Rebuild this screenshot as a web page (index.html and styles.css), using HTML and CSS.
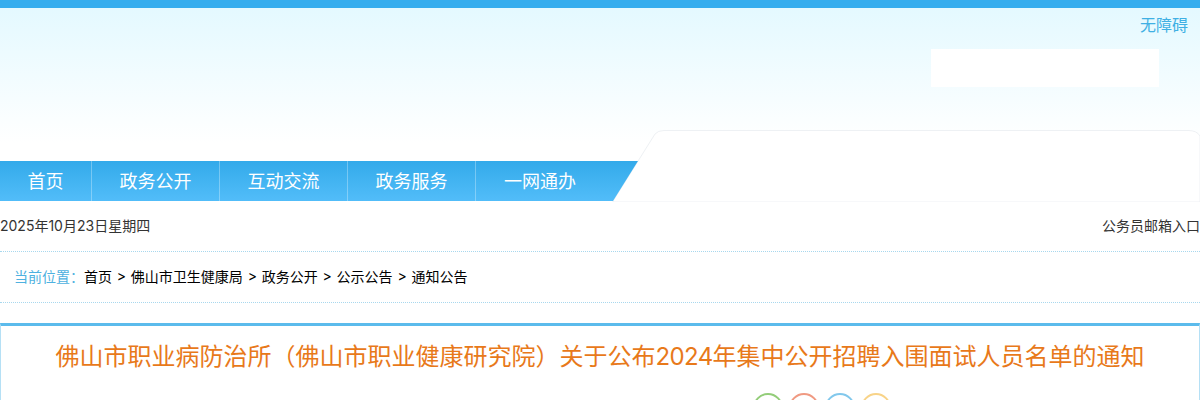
FILE: index.html
```html
<!DOCTYPE html>
<html lang="zh-CN">
<head>
<meta charset="utf-8">
<title>关于公布2024年集中公开招聘入围面试人员名单的通知</title>
<link rel="stylesheet" href="styles.css">
</head>
<body>
<header class="header">
  <div class="util"><a class="access" href="#">无障碍</a></div>
  <div class="search-row"><div class="search-box"></div></div>
  <svg class="tab-shape" width="590" height="72" viewBox="0 0 590 72" aria-hidden="true">
    <path d="M3 71 L45 4 Q48 0.5 54 0.5 L578 0.5 Q587 0.5 590 6 L590 72 L3 72 Z" fill="#fff" stroke="#eef1f4"/>
  </svg>
  <nav class="nav">
    <a class="nav-item nav-first" href="#">首页</a>
    <a class="nav-item" href="#">政务公开</a>
    <a class="nav-item" href="#">互动交流</a>
    <a class="nav-item" href="#">政务服务</a>
    <a class="nav-item nav-last" href="#">一网通办</a>
  </nav>
</header>
<div class="date-row">
  <span>2025年10月23日星期四</span>
  <a href="#">公务员邮箱入口</a>
</div>
<div class="crumbs">
  <span class="crumb-label">当前位置：</span>
  <a href="#">首页</a><span class="sep">&gt;</span>
  <a href="#">佛山市卫生健康局</a><span class="sep">&gt;</span>
  <a href="#">政务公开</a><span class="sep">&gt;</span>
  <a href="#">公示公告</a><span class="sep">&gt;</span>
  <a href="#">通知公告</a>
</div>
<main class="panel">
  <h1 class="title">佛山市职业病防治所（佛山市职业健康研究院）关于公布<span class="num">2024</span>年集中公开招聘入围面试人员名单的通知</h1>
  <div class="meta">
    <span class="meta-text meta-date">发布日期：2024-12-20</span>
    <span class="meta-text meta-src">来源：本网</span>
    <span class="meta-text meta-size">字体：大 中 小</span>
    <span class="share share-green"></span>
    <span class="share share-red"></span>
    <span class="share share-blue"></span>
    <span class="share share-yellow"></span>
  </div>
</main>
</body>
</html>
```
FILE: styles.css
```css
* { box-sizing: border-box; }
html, body { margin: 0; height: 400px; overflow: hidden; }
body { font-family: Inter, "Noto Sans CJK SC", sans-serif; background: #fff; color: #000; font-size: 14px; }
a { color: inherit; text-decoration: none; }

.header {
  position: relative;
  height: 201px;
  border-top: 8px solid #35adee;
  background: linear-gradient(#e4f9ff 0, #ffffff 135px);
}
.util { display: flex; justify-content: flex-end; height: 41px; padding: 7px 12px 0 0; }
.access { color: #3fb0e4; font-size: 16px; line-height: 20px; }
.search-row { display: flex; justify-content: flex-end; padding-right: 41px; }
.search-box { width: 228px; height: 38px; background: #fff; }
.tab-shape { position: absolute; left: 610px; top: 122px; }

.nav {
  position: absolute;
  left: 0;
  top: 153px;
  display: flex;
  width: 638px;
  height: 40px;
  background: linear-gradient(#33aaea, #52bdf9);
  clip-path: polygon(0 0, 100% 0, 613px 100%, 0 100%);
}
.nav-item {
  width: 128px;
  border-right: 1px solid rgba(255,255,255,.3);
  color: #fff;
  font-size: 18px;
  line-height: 42px;
  text-align: center;
}
.nav-first { width: 92px; }
.nav-last { border-right: 0; }

.date-row {
  display: flex;
  justify-content: space-between;
  height: 50px;
  padding-bottom: 3px;
  align-items: center;
  color: #333;
  font-size: 14px;
}
.crumbs {
  display: flex;
  align-items: center;
  height: 52px;
  padding-left: 14px;
  padding-bottom: 3px;
  border-top: 1px dotted #a8d8ee;
  border-bottom: 1px dotted #a8d8ee;
  font-size: 14px;
}
.crumb-label { color: #4eb1e0; width: 70px; }
.sep { margin: 0 4.8px; }

.panel {
  margin-top: 20px;
  height: 200px;
  border: 1px solid #b5e0f5;
  border-top: 3px solid #5bbbec;
}
.title {
  margin: 0;
  padding-top: 14px;
  color: #e8791a;
  font-size: 24px;
  font-weight: 400;
  line-height: 34px;
  text-align: center;
}
.num { letter-spacing: -.6px; }
.meta { display: flex; align-items: flex-start; height: 40px; margin-top: 19px; padding-left: 304px; font-size: 14px; line-height: 20px; color: #333; }
.meta-text { margin-top: 4px; }
.meta-date { width: 217px; }
.meta-src { width: 95px; }
.meta-size { width: 136px; }
.share { width: 30px; height: 30px; margin-right: 6px; border-radius: 50%; border: 2px solid; }
.share-green { border-color: #93cd79; }
.share-red { border-color: #f09a82; }
.share-blue { border-color: #82c8ec; }
.share-yellow { border-color: #f8d388; }
```
